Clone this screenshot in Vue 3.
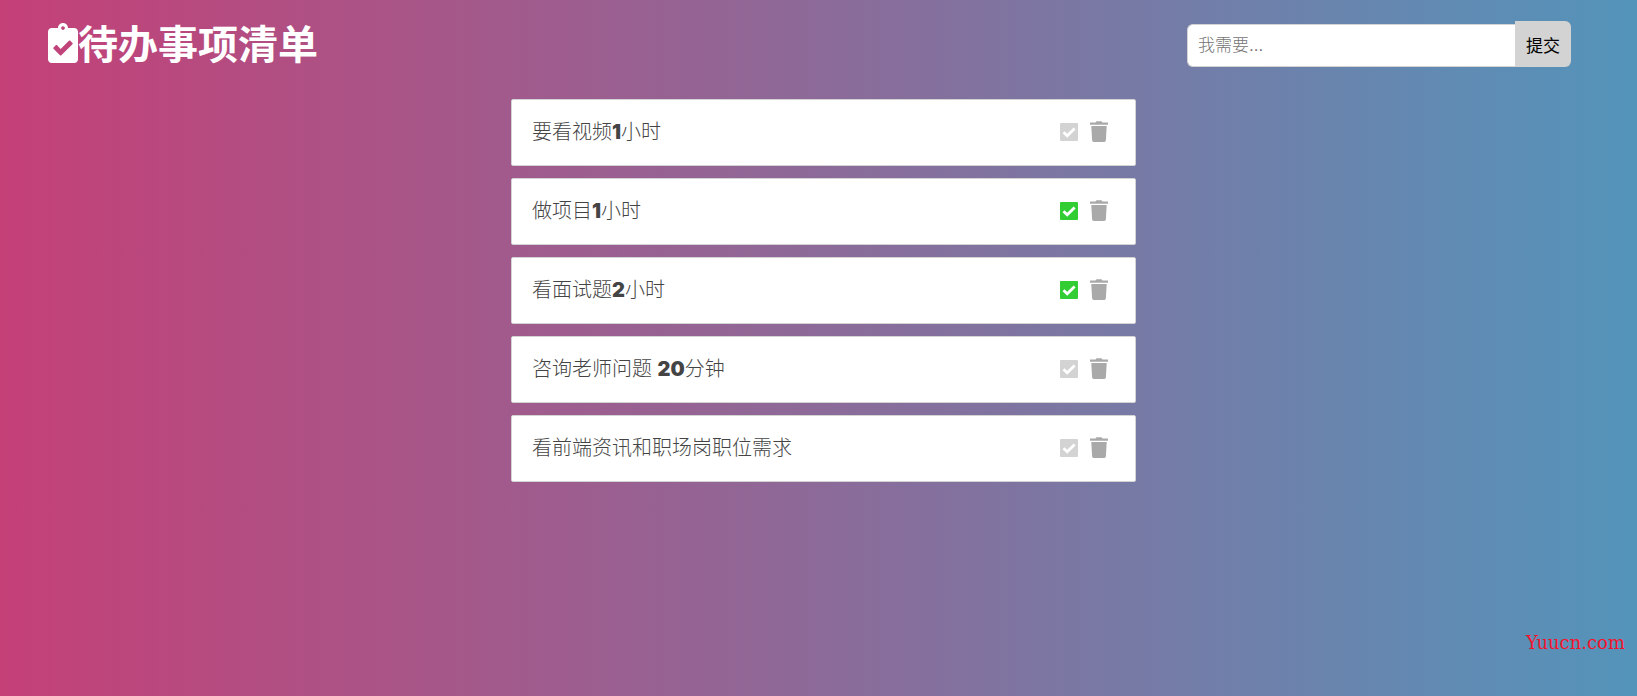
<script setup>
import { ref } from 'vue'

const draft = ref('')
const items = ref([
  { id: 1, text: '要看视频1小时', done: false },
  { id: 2, text: '做项目1小时', done: true },
  { id: 3, text: '看面试题2小时', done: true },
  { id: 4, text: '咨询老师问题 20分钟', done: false },
  { id: 5, text: '看前端资讯和职场岗职位需求', done: false }
])

// Splits a label so that its digits can take the heavy face.
const parts = (text) => text.split(/(\d+)/).filter(Boolean)

function add() {
  const text = draft.value.trim()
  if (!text) return
  items.value.push({ id: Date.now(), text, done: false })
  draft.value = ''
}

function remove(id) {
  items.value = items.value.filter((item) => item.id !== id)
}
</script>

<template>
  <div class="page">
    <header class="header">
      <h1 class="title">
        <svg class="title-icon" viewBox="0 0 384 512" aria-hidden="true">
          <path fill="currentColor" d="M336 64h-80c0-35.300-28.700-64-64-64s-64 28.700-64 64H48C21.500 64 0 85.500 0 112v352c0 26.500 21.500 48 48 48h288c26.500 0 48-21.500 48-48V112c0-26.500-21.500-48-48-48zM192 40c13.300 0 24 10.700 24 24s-10.700 24-24 24-24-10.700-24-24 10.700-24 24-24zm121.200 231.800l-143 141.800c-4.700 4.700-12.300 4.600-17-.1l-82.600-83.300c-4.700-4.700-4.600-12.300.1-17L99.100 285c4.700-4.700 12.300-4.600 17 .1l46 46.400 106-105.200c4.700-4.700 12.300-4.600 17 .1l28.200 28.400c4.700 4.800 4.600 12.300-.1 17z" />
        </svg>
        <span>待办事项清单</span>
      </h1>
      <form class="form" @submit.prevent="add">
        <input v-model="draft" class="field" type="text" placeholder="我需要..." aria-label="我需要" />
        <button class="submit" type="submit">提交</button>
      </form>
    </header>

    <ul class="list">
      <li v-for="item in items" :key="item.id" class="card">
        <span class="text"><span v-for="(part, i) in parts(item.text)" :key="i" :class="{ digits: /\d/.test(part) }">{{ part }}</span></span>
        <div class="actions">
          <button class="icon check" :class="{ done: item.done }" type="button" aria-label="完成" :aria-pressed="item.done" @click="item.done = !item.done">
            <svg viewBox="0 0 18 18" width="18" height="18">
              <rect width="18" height="18" rx="1" fill="currentColor" />
              <path d="M3.500 9.300 7.200 12.800 14.600 5.400" fill="none" stroke="#fff" stroke-width="2.800" />
            </svg>
          </button>
          <button class="icon trash" type="button" aria-label="删除" @click="remove(item.id)">
            <svg viewBox="0 0 18 21" width="18" height="21">
              <path fill="currentColor" d="M0 1.500h5.500L6.500.2h5l1 1.300H18v2.300H0zM1.300 5h15.400l-.8 14.200q-.1 1.700-1.700 1.700H3.800q-1.600 0-1.700-1.700z" />
            </svg>
          </button>
        </div>
      </li>
    </ul>

    <footer class="mark">Yuucn.com</footer>
  </div>
</template>

<style>
body {
  margin: 0;
}
</style>

<style scoped>
.page {
  box-sizing: border-box;
  min-height: 100vh;
  display: flex;
  flex-direction: column;
  background: linear-gradient(to right, #c44077, #5494ba);
  font-family: "Liberation Sans", "Noto Sans CJK SC", sans-serif;
}

.header {
  display: flex;
  justify-content: space-between;
  align-items: flex-end;
  padding: 21px 66px 0 48px;
}

.title {
  display: flex;
  align-items: center;
  margin: 0;
  color: #fff;
  font-size: 40px;
  line-height: 48px;
  font-weight: 700;
}

.title-icon {
  width: 30px;
  height: 40px;
  margin-bottom: 4px;
}

.form {
  display: flex;
  align-items: flex-end;
  padding-bottom: 2px;
}

.field {
  box-sizing: border-box;
  width: 328px;
  height: 43px;
  padding: 0 10px;
  border: 1px solid #d3d3d3;
  border-right: 0;
  border-radius: 6px 0 0 6px;
  background: #fff;
  color: #444;
  font: inherit;
  font-size: 17px;
  font-weight: 300;
  outline: none;
}

.field::placeholder {
  color: #757575;
}

.submit {
  width: 56px;
  height: 46px;
  padding: 0;
  border: 0;
  border-radius: 0 6px 6px 0;
  background: #d3d3d3;
  color: #000;
  font: inherit;
  font-size: 17px;
  cursor: pointer;
}

.list {
  display: flex;
  flex-direction: column;
  gap: 12px;
  width: 100%;
  max-width: 625px;
  margin: 30px auto 0;
  padding: 0 0 0 10px;
  list-style: none;
}

.card {
  box-sizing: border-box;
  height: 67px;
  display: flex;
  align-items: center;
  justify-content: space-between;
  padding: 0 27px 2px 20px;
  border: 1px solid #d3d3d3;
  border-radius: 2px;
  background: #fff;
}

.text {
  color: #444;
  font-size: 20px;
  font-weight: 300;
  line-height: 24px;
  white-space: pre;
}

.digits {
  font-family: Inter, "Liberation Sans", sans-serif;
  font-weight: 900;
}

.actions {
  display: flex;
  align-items: center;
  gap: 12px;
}

.icon {
  display: flex;
  padding: 0;
  border: 0;
  background: none;
  cursor: pointer;
}

.check {
  color: #d3d3d3;
}

.check.done {
  color: #32cd32;
}

.trash {
  color: #a9a9a9;
}

.mark {
  margin-top: auto;
  padding: 0 12px 43px;
  color: #f5142d;
  font-family: "DejaVu Serif", serif;
  font-size: 18px;
  line-height: 20px;
  text-align: right;
}
</style>
